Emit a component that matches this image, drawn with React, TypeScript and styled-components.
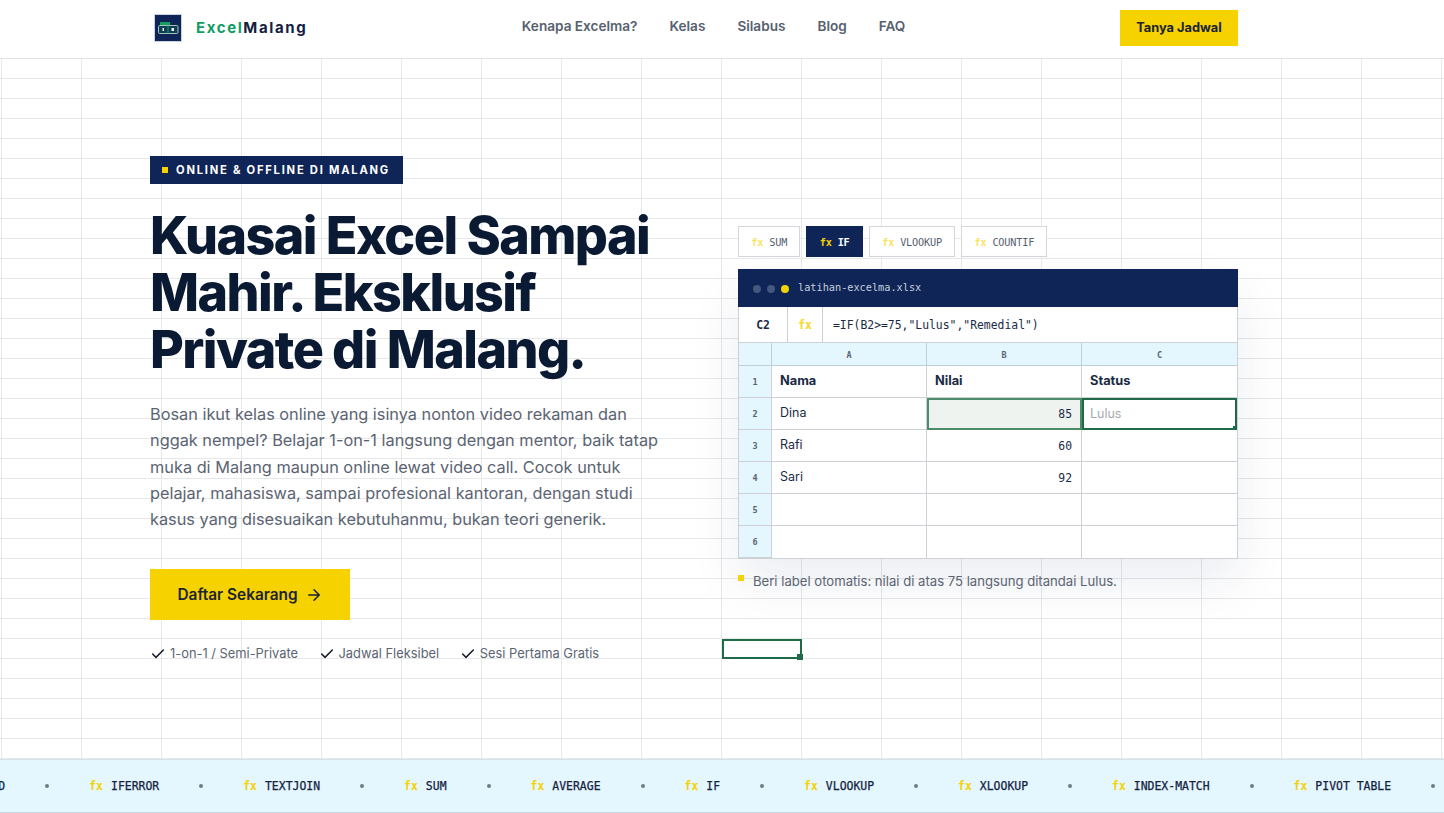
import React from "react";
import styled, { createGlobalStyle } from "styled-components";

const Global = createGlobalStyle`
  * { box-sizing: border-box; }
  html, body { margin: 0; padding: 0; background: #fff; }
  body { font-family: Inter, "Liberation Sans", sans-serif; color: #0f1f3d; overflow-x: hidden; }
`;
const mono = `"DejaVu Sans Mono", "Liberation Mono", monospace`;
const navy = "#0f2557";
const yellow = "#f5d200";
const green = "#1f6b47";
const line = "#cdd0d4";
const ice = "#e4f6fe";

const Nav = styled.header`
  height: 59px;
  padding-left: 150px;
  border-bottom: 1px solid #dfe3e6;
  background: #fff;
`;
const NavInner = styled.div`
  width: 1088px;
  height: 56px;
  display: flex;
  align-items: center;
  justify-content: space-between;
`;
const Brand = styled.a`
  display: flex;
  align-items: center;
  gap: 14px;
  margin-left: 4px;
`;
const BrandName = styled.span`
  margin-top: -2px;
  font-size: 15px;
  font-weight: 700;
  letter-spacing: 1.6px;
  color: #13213f;
`;
const BrandAccent = styled.span`
  color: #0f9d63;
`;
const NavLinks = styled.nav`
  display: flex;
  gap: 32px;
  margin-top: -4px;
`;
const NavLink = styled.a`
  font-size: 13.6px;
  font-weight: 600;
  color: #566170;
`;
const NavButton = styled.button`
  width: 118px;
  height: 36px;
  padding: 0 0 2px;
  border: 0;
  background: ${yellow};
  color: #1b2330;
  font: 700 12.8px Inter, sans-serif;
`;
const Hero = styled.section`
  position: relative;
  height: 700px;
  padding-left: 150px;
  display: flex;
  align-items: center;
  background-color: #fff;
  background-image:
    linear-gradient(to right, #e6e8ea 1px, transparent 1px),
    linear-gradient(to bottom, #e6e8ea 1px, transparent 1px);
  background-size: 80px 20px;
  background-position: 1px -1px;
`;
const HeroGrid = styled.div`
  width: 1088px;
  display: grid;
  grid-template-columns: 520px 500px;
  column-gap: 68px;
  align-items: center;
`;
const Left = styled.div`
  padding-top: 1px;
  display: flex;
  flex-direction: column;
  align-items: flex-start;
`;
const Badge = styled.div`
  height: 28px;
  width: 253px;
  padding-left: 12px;
  background: ${navy};
  color: #fff;
  display: flex;
  align-items: center;
  gap: 8px;
  font-size: 11.2px;
  font-weight: 700;
  letter-spacing: 1.76px;
`;
const BadgeSquare = styled.i`
  width: 6px;
  height: 6px;
  background: ${yellow};
`;
const Title = styled.h1`
  margin: 23.5px 0 0;
  font-size: 52px;
  line-height: 57px;
  font-weight: 800;
  letter-spacing: -1.56px;
  color: #0b1a33;
`;
const Lead = styled.p`
  margin: 22.6px 0 0;
  font-size: 16.32px;
  line-height: 26.4px;
  color: #5b6472;
  width: 520px;
`;
const Cta = styled.button`
  margin-top: 36.5px;
  width: 200px;
  height: 51px;
  border: 0;
  background: ${yellow};
  color: #1b2330;
  font: 600 15.36px Inter, sans-serif;
  display: flex;
  align-items: center;
  justify-content: center;
  gap: 7px;
`;
const Checks = styled.ul`
  list-style: none;
  margin: 25px 0 0;
  padding: 0;
  display: flex;
  gap: 20.5px;
`;
const Check = styled.li`
  display: flex;
  align-items: center;
  gap: 4px;
  font-size: 12.88px;
  line-height: 18px;
  color: #5b6472;
`;
const Right = styled.div`
  display: flex;
  flex-direction: column;
`;
const Tabs = styled.div`
  display: flex;
  gap: 6px;
  margin-bottom: 12px;
`;
const Tab = styled.button<{ $active?: boolean }>`
  height: 31px;
  padding: 0 12.3px;
  border: 1px solid ${(p) => (p.$active ? navy : "#d3d7dc")};
  background: ${(p) => (p.$active ? navy : "#fff")};
  color: ${(p) => (p.$active ? "#fff" : "#566170")};
  font: ${(p) => (p.$active ? 700 : 400)} 10.24px ${mono};
  letter-spacing: -0.2px;
  display: flex;
  align-items: center;
  gap: 6px;
`;
const Fx = styled.span<{ $level?: number }>`
  color: ${yellow};
  font-family: ${mono};
  font-weight: 700;
  opacity: ${(p) => p.$level ?? 1};
`;
const Sheet = styled.div`
  border: 1px solid ${line};
  background: #fff;
  box-shadow: 0 24px 48px rgba(15, 37, 87, 0.08);
`;
const TitleBar = styled.div`
  height: 38px;
  margin: -1px -1px 0;
  padding-left: 15px;
  background: ${navy};
  display: flex;
  align-items: center;
  gap: 6px;
`;
const Dot = styled.i<{ $on?: boolean }>`
  width: 8px;
  height: 8px;
  margin-top: 1px;
  border-radius: 50%;
  background: ${(p) => (p.$on ? yellow : "#45577f")};
`;
const FileName = styled.span`
  margin-left: 3px;
  margin-top: -2px;
  font: 10.24px ${mono};
  color: #c6d0df;
`;
const FormulaRow = styled.div`
  height: 36px;
  display: grid;
  grid-template-columns: 48px 35px 1fr;
  border-bottom: 1px solid ${line};
  font-family: ${mono};
  font-size: 11.4px;
  align-items: stretch;
`;
const FormulaCell = styled.div<{ $center?: boolean; $bold?: boolean }>`
  display: flex;
  align-items: center;
  justify-content: ${(p) => (p.$center ? "center" : "flex-start")};
  padding-left: ${(p) => (p.$center ? 0 : "10px")};
  font-weight: ${(p) => (p.$bold ? 700 : 400)};
  color: #1b2a44;
  & + & { border-left: 1px solid ${line}; }
`;
const Cells = styled.div`
  display: grid;
  grid-template-columns: 33px 155px 155px 155px;
  grid-template-rows: 23px repeat(6, 32px);
`;
const Corner = styled.div<{ $last?: boolean }>`
  background: ${ice};
  border-right: ${(p) => (p.$last ? 0 : "1px solid #bccfdb")};
  border-bottom: 1px solid #bccfdb;
  padding-top: 1px;
  display: flex;
  align-items: center;
  justify-content: center;
  font: 700 8.5px ${mono};
  color: #5b6472;
`;
const RowHead = styled(Corner)`
  border-bottom-color: ${line};
  border-right-color: ${line};
  padding-top: 0;
`;
const Cell = styled.div<{ $num?: boolean; $head?: boolean; $last?: boolean; $sel?: boolean; $target?: boolean; $end?: boolean }>`
  position: relative;
  display: flex;
  align-items: center;
  justify-content: ${(p) => (p.$num ? "flex-end" : "flex-start")};
  padding: ${(p) => (p.$num ? "0 9px 0 8px" : p.$target ? "0 8px" : "0 8px 2px")};
  border-right: ${(p) => (p.$last ? 0 : `1px solid ${line}`)};
  border-bottom: ${(p) => (p.$end ? 0 : `1px solid ${line}`)};
  font-family: ${(p) => (p.$num ? mono : "Inter, sans-serif")};
  font-size: ${(p) => (p.$num ? "11.4px" : p.$head ? "12.8px" : "12.48px")};
  font-weight: ${(p) => (p.$head ? 700 : 400)};
  color: ${(p) => (p.$target ? "#a5abb3" : "#1b2a44")};
  ${(p) => (p.$sel ? `background: #eef3f0; outline: 2px solid #4d8b69; outline-offset: -2px;` : "")}
  ${(p) => (p.$target ? `outline: 2px solid ${green}; outline-offset: -2px; z-index: 1;` : "")}
`;
const Handle = styled.i`
  position: absolute;
  right: 0;
  bottom: -1px;
  width: 4px;
  height: 4px;
  background: ${green};
`;
const Note = styled.p`
  margin: 13px 0 2px;
  display: flex;
  gap: 9px;
  font-size: 13.12px;
  line-height: 18px;
  color: #5b6472;
`;
const NoteSquare = styled.i`
  flex: none;
  width: 6px;
  height: 6px;
  margin-top: 3px;
  background: ${yellow};
`;
const FloatCell = styled.div`
  position: absolute;
  left: 722px;
  top: 580px;
  width: 80px;
  height: 20px;
  border: 2px solid ${green};
`;
const FloatHandle = styled.i`
  position: absolute;
  right: -3px;
  bottom: -3px;
  width: 6px;
  height: 6px;
  background: ${green};
`;
const Ticker = styled.div`
  height: 54px;
  background: ${ice};
  border-top: 1px solid #d3e3ec;
  border-bottom: 1px solid #c6d9e4;
  overflow: hidden;
  display: flex;
  align-items: center;
`;
const Track = styled.div`
  flex: none;
  display: flex;
  align-items: center;
  gap: 40px;
  transform: translateX(-51px);
  white-space: nowrap;
`;
const TickItem = styled.span`
  display: flex;
  gap: 8px;
  font: 400 11.44px ${mono};
  -webkit-text-stroke: 0.25px #14233f;
  color: #14233f;
`;
const TickFx = styled(Fx)`
  -webkit-text-stroke: 0;
`;
const Sep = styled.i`
  width: 4px;
  height: 4px;
  border-radius: 50%;
  background: #6e7b8a;
`;

const LogoMark = () => (
  <svg width="28" height="28" viewBox="0 0 28 28">
    <rect x="0.5" y="0.5" width="27" height="27" fill={navy} stroke="#c9d3e2" />
    <rect x="6" y="8" width="10" height="3.5" fill="#13a05f" />
    <rect x="4.5" y="11.5" width="19.5" height="8" rx="1.2" fill="#0f3f55" stroke="#9fc5bd" />
    <line x1="14" y1="11.5" x2="14" y2="19.5" stroke="#13a05f" />
    <rect x="8.5" y="14" width="1.5" height="3" fill="#e7edf3" />
    <rect x="17.5" y="14" width="2.5" height="3" fill="#e7edf3" />
  </svg>
);
const CheckIcon = () => (
  <svg width="16" height="16" viewBox="0 0 24 24" fill="none" stroke="#1b2330" strokeWidth="2.4" strokeLinecap="round" strokeLinejoin="round">
    <path d="M20 6 9 17l-5-5" />
  </svg>
);
const ArrowIcon = () => (
  <svg width="18" height="18" viewBox="0 0 24 24" fill="none" stroke="#1b2330" strokeWidth="2" strokeLinecap="round" strokeLinejoin="round">
    <path d="M5 12h14M12 5l7 7-7 7" />
  </svg>
);

const ticks = ["ROUND", "IFERROR", "TEXTJOIN", "SUM", "AVERAGE", "IF", "VLOOKUP", "XLOOKUP", "INDEX-MATCH", "PIVOT TABLE"];
const tabs = ["SUM", "IF", "VLOOKUP", "COUNTIF"];

export default function App() {
  return (
    <>
      <Global />
      <Nav>
        <NavInner>
          <Brand>
            <LogoMark />
            <BrandName><BrandAccent>Excel</BrandAccent>Malang</BrandName>
          </Brand>
          <NavLinks>
            {["Kenapa Excelma?", "Kelas", "Silabus", "Blog", "FAQ"].map((l) => <NavLink key={l}>{l}</NavLink>)}
          </NavLinks>
          <NavButton>Tanya Jadwal</NavButton>
        </NavInner>
      </Nav>
      <Hero>
        <HeroGrid>
          <Left>
            <Badge><BadgeSquare />ONLINE &amp; OFFLINE DI MALANG</Badge>
            <Title>Kuasai Excel Sampai<br />Mahir. Eksklusif<br />Private di Malang.</Title>
            <Lead>
              Bosan ikut kelas online yang isinya nonton video rekaman dan nggak nempel? Belajar 1-on-1 langsung dengan mentor, baik tatap muka di Malang maupun online lewat video call. Cocok untuk pelajar, mahasiswa, sampai profesional kantoran, dengan studi kasus yang disesuaikan kebutuhanmu, bukan teori generik.
            </Lead>
            <Cta>Daftar Sekarang <ArrowIcon /></Cta>
            <Checks>
              {["1-on-1 / Semi-Private", "Jadwal Fleksibel", "Sesi Pertama Gratis"].map((c) => (
                <Check key={c}><CheckIcon />{c}</Check>
              ))}
            </Checks>
          </Left>
          <Right>
            <Tabs>
              {tabs.map((t) => (
                <Tab key={t} $active={t === "IF"}><Fx $level={t === "IF" ? 1 : 0.6}>fx</Fx>{t}</Tab>
              ))}
            </Tabs>
            <Sheet>
              <TitleBar>
                <Dot /><Dot /><Dot $on />
                <FileName>latihan-excelma.xlsx</FileName>
              </TitleBar>
              <FormulaRow>
                <FormulaCell $center $bold>C2</FormulaCell>
                <FormulaCell $center><Fx $level={0.85}>fx</Fx></FormulaCell>
                <FormulaCell>=IF(B2&gt;=75,"Lulus","Remedial")</FormulaCell>
              </FormulaRow>
              <Cells>
                <Corner />
                <Corner>A</Corner>
                <Corner>B</Corner>
                <Corner $last>C</Corner>

                <RowHead>1</RowHead>
                <Cell $head>Nama</Cell>
                <Cell $head>Nilai</Cell>
                <Cell $head $last>Status</Cell>

                <RowHead>2</RowHead>
                <Cell>Dina</Cell>
                <Cell $num $sel>85</Cell>
                <Cell $last $target>Lulus<Handle /></Cell>

                <RowHead>3</RowHead>
                <Cell>Rafi</Cell>
                <Cell $num>60</Cell>
                <Cell $last />

                <RowHead>4</RowHead>
                <Cell>Sari</Cell>
                <Cell $num>92</Cell>
                <Cell $last />

                <RowHead>5</RowHead>
                <Cell />
                <Cell />
                <Cell $last />

                <RowHead>6</RowHead>
                <Cell $end />
                <Cell $end />
                <Cell $last $end />
              </Cells>
            </Sheet>
            <Note><NoteSquare />Beri label otomatis: nilai di atas 75 langsung ditandai Lulus.</Note>
          </Right>
        </HeroGrid>
        <FloatCell><FloatHandle /></FloatCell>
      </Hero>
      <Ticker>
        <Track>
          {ticks.map((t) => (
            <React.Fragment key={t}>
              <TickItem><TickFx>fx</TickFx>{t}</TickItem>
              <Sep />
            </React.Fragment>
          ))}
        </Track>
      </Ticker>
    </>
  );
}
